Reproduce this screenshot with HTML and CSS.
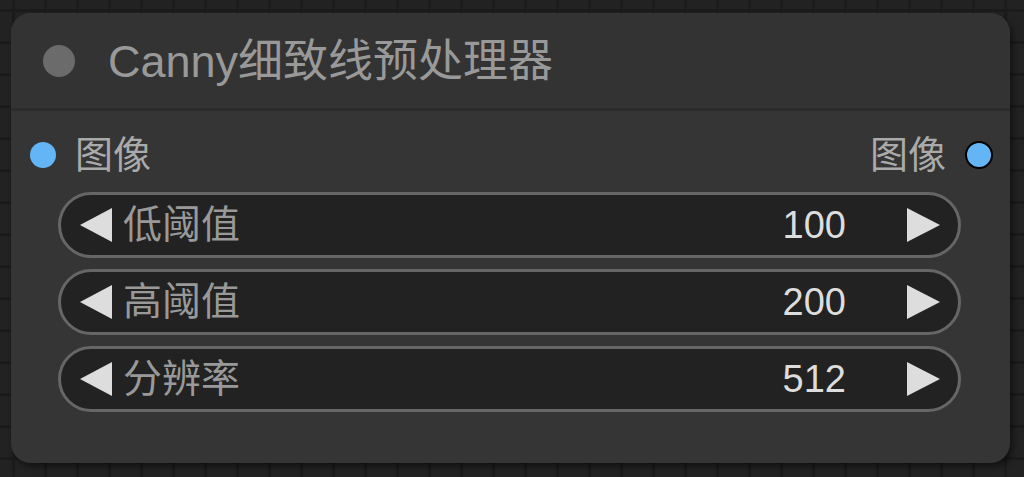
FILE: index.html
```html
<!DOCTYPE html>
<html lang="zh-CN">
<head>
    <meta charset="UTF-8">
    <meta name="viewport" content="width=device-width, initial-scale=1.0">
    <title>Canny细致线预处理器</title>
    <link rel="stylesheet" href="styles.css">
</head>
<body>
    <div class="canvas">
        <div class="node">
            <div class="node-title">
                <span class="title-dot"></span>
                <span class="title-text">Canny细致线预处理器</span>
            </div>
            <div class="node-body">
                <div class="slots">
                    <div class="slot slot-in">
                        <span class="slot-dot"></span>
                        <span>图像</span>
                    </div>
                    <div class="slot slot-out">
                        <span>图像</span>
                        <span class="slot-dot"></span>
                    </div>
                </div>
                <div class="widget">
                    <span class="arrow arrow-left"></span>
                    <span class="widget-label">低阈值</span>
                    <span class="widget-value">100</span>
                    <span class="arrow arrow-right"></span>
                </div>
                <div class="widget">
                    <span class="arrow arrow-left"></span>
                    <span class="widget-label">高阈值</span>
                    <span class="widget-value">200</span>
                    <span class="arrow arrow-right"></span>
                </div>
                <div class="widget">
                    <span class="arrow arrow-left"></span>
                    <span class="widget-label">分辨率</span>
                    <span class="widget-value">512</span>
                    <span class="arrow arrow-right"></span>
                </div>
            </div>
        </div>
    </div>
</body>
</html>
```

FILE: styles.css
```css
html, body {
    margin: 0;
    padding: 0;
    height: 100%;
}
body {
    font-family: "Liberation Sans", Arial, "Noto Sans CJK SC", sans-serif;
    background-color: #222;
    background-image:
        linear-gradient(90deg, #1b1b1b 3px, transparent 3px),
        linear-gradient(180deg, #1b1b1b 3px, transparent 3px);
    background-size: 32px 32px;
    background-position: 12px 9px;
    overflow: hidden;
}
.canvas {
    padding: 13px 0 0 11px;
}
.node {
    width: 999px;
    height: 450px;
    background: #353535;
    border-radius: 20px;
    box-shadow: 3px 4px 6px rgba(0, 0, 0, 0.45);
    overflow: hidden;
}
.node-title {
    height: 98px;
    display: flex;
    align-items: center;
    background: #333;
    border-bottom: 3px solid #2b2b2b;
    box-sizing: border-box;
}
.title-dot {
    width: 32px;
    height: 32px;
    border-radius: 50%;
    background: #6b6b6b;
    margin-left: 32px;
    margin-right: 33px;
}
.title-text {
    color: #999;
    font-size: 45px;
    line-height: 1;
    margin-top: 2px;
}
.node-body {
    padding: 24px 49px 0 47px;
}
.slots {
    display: flex;
    justify-content: space-between;
    height: 40px;
    margin: 0 -49px 17px -47px;
    color: #aaa;
    font-size: 38px;
    line-height: 1;
}
.slot {
    display: flex;
    align-items: center;
    gap: 19px;
}
.slot-in {
    padding-left: 19px;
}
.slot-out {
    padding-right: 17px;
    gap: 19px;
}
.slot-dot {
    width: 26px;
    height: 26px;
    border-radius: 50%;
    background: #64b5f6;
}
.slot-out .slot-dot {
    width: 24px;
    height: 24px;
    border: 2px solid #000;
}
.widget {
    height: 66px;
    box-sizing: border-box;
    border: 3px solid #666;
    border-radius: 33px;
    background: #222;
    display: flex;
    align-items: center;
    padding: 0 18px 0 19px;
    margin-bottom: 11px;
    line-height: 1;
}
.arrow {
    width: 0;
    height: 0;
    border-top: 17px solid transparent;
    border-bottom: 17px solid transparent;
}
.arrow-left {
    border-right: 32px solid #ddd;
}
.arrow-right {
    border-left: 33px solid #ddd;
}
.widget-label {
    color: #999;
    font-size: 39px;
    margin-left: 11px;
    margin-bottom: 1px;
    flex: 1;
}
.widget-value {
    color: #ddd;
    font-size: 38px;
    margin-right: 61px;
    margin-bottom: 1px;
}
```
